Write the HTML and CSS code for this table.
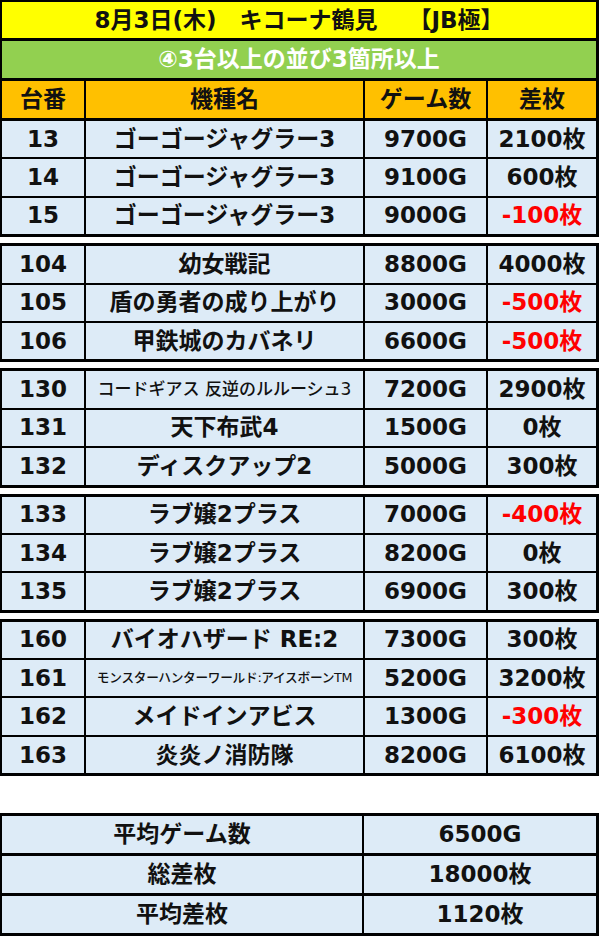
FILE: index.html
```html
<!DOCTYPE html>
<html lang="ja">
<head>
<meta charset="utf-8">
<title>8月3日(木) キコーナ鶴見</title>
<link rel="stylesheet" href="styles.css">
</head>
<body>
<div class="sheet">
  <div class="head">
    <div class="title">8月3日(木)　キコーナ鶴見　 【JB極】</div>
    <div class="sub">④3台以上の並び3箇所以上</div>
    <div class="cols">
      <div class="c">台番</div>
      <div class="c">機種名</div>
      <div class="c">ゲーム数</div>
      <div class="c">差枚</div>
    </div>
  </div>

  <div class="group first">
    <div class="c">13</div><div class="c">ゴーゴージャグラー3</div><div class="c">9700G</div><div class="c">2100枚</div>
    <div class="c">14</div><div class="c">ゴーゴージャグラー3</div><div class="c">9100G</div><div class="c">600枚</div>
    <div class="c">15</div><div class="c">ゴーゴージャグラー3</div><div class="c">9000G</div><div class="c neg">-100枚</div>
  </div>

  <div class="group">
    <div class="c">104</div><div class="c">幼女戦記</div><div class="c">8800G</div><div class="c">4000枚</div>
    <div class="c">105</div><div class="c">盾の勇者の成り上がり</div><div class="c">3000G</div><div class="c neg">-500枚</div>
    <div class="c">106</div><div class="c">甲鉄城のカバネリ</div><div class="c">6600G</div><div class="c neg">-500枚</div>
  </div>

  <div class="group">
    <div class="c">130</div><div class="c small">コードギアス 反逆のルルーシュ3</div><div class="c">7200G</div><div class="c">2900枚</div>
    <div class="c">131</div><div class="c">天下布武4</div><div class="c">1500G</div><div class="c">0枚</div>
    <div class="c">132</div><div class="c">ディスクアップ2</div><div class="c">5000G</div><div class="c">300枚</div>
  </div>

  <div class="group">
    <div class="c">133</div><div class="c">ラブ嬢2プラス</div><div class="c">7000G</div><div class="c neg">-400枚</div>
    <div class="c">134</div><div class="c">ラブ嬢2プラス</div><div class="c">8200G</div><div class="c">0枚</div>
    <div class="c">135</div><div class="c">ラブ嬢2プラス</div><div class="c">6900G</div><div class="c">300枚</div>
  </div>

  <div class="group">
    <div class="c">160</div><div class="c">バイオハザード RE:2</div><div class="c">7300G</div><div class="c">300枚</div>
    <div class="c">161</div><div class="c tiny">モンスターハンターワールド:アイスボーンTM</div><div class="c">5200G</div><div class="c">3200枚</div>
    <div class="c">162</div><div class="c">メイドインアビス</div><div class="c">1300G</div><div class="c neg">-300枚</div>
    <div class="c">163</div><div class="c">炎炎ノ消防隊</div><div class="c">8200G</div><div class="c">6100枚</div>
  </div>

  <div class="summary">
    <div class="c">平均ゲーム数</div><div class="c">6500G</div>
    <div class="c">総差枚</div><div class="c">18000枚</div>
    <div class="c">平均差枚</div><div class="c">1120枚</div>
  </div>
</div>
</body>
</html>
```

FILE: styles.css
```css
html, body {
  margin: 0;
  padding: 0;
  background: #ffffff;
}

.sheet {
  width: 599px;
  font-family: "DejaVu Sans", "Noto Sans CJK JP", sans-serif;
  font-weight: bold;
  font-size: 23px;
  line-height: 1;
  color: #111111;
}

.c {
  display: flex;
  align-items: center;
  justify-content: center;
  white-space: nowrap;
  background: #ddebf7;
}

.head {
  border: solid #000;
  border-width: 2px 3px 3px 2px;
  background: #000;
}

.title {
  height: 36px;
  display: flex;
  align-items: center;
  justify-content: center;
  background: #ffff00;
  border-bottom: 3px solid #000;
  white-space: pre;
}

.sub {
  height: 37px;
  display: flex;
  align-items: center;
  justify-content: center;
  background: #92d050;
  color: #ffffff;
  border-bottom: 3px solid #000;
}

.cols {
  display: grid;
  grid-template-columns: 82px 277px 121px 108px;
  column-gap: 2px;
  height: 37px;
}

.cols .c {
  background: #ffc000;
}

.group {
  display: grid;
  grid-template-columns: 82px 277px 121px 108px;
  grid-auto-rows: 36.4px;
  gap: 2px;
  background: #000;
  border: solid #000;
  border-width: 3px 3px 3px 2px;
  margin-top: 6px;
}

.group.first {
  border-top-width: 0;
  margin-top: 0;
}

.neg {
  color: #ff0000;
}

.small {
  font-size: 17px;
  font-weight: 500;
}

.tiny {
  font-size: 12.7px;
  font-weight: 500;
  letter-spacing: -0.3px;
}

.summary {
  display: grid;
  grid-template-columns: 360px 232px;
  grid-auto-rows: 37px;
  gap: 3px 2px;
  background: #000;
  border: solid #000;
  border-width: 3px 3px 3px 2px;
  margin-top: 37px;
}
```
